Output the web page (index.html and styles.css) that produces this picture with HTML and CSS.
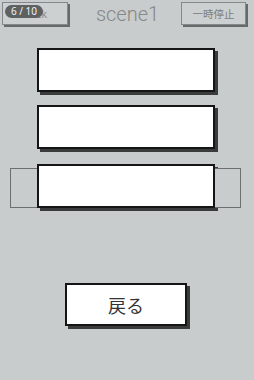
FILE: index.html
```html
<!DOCTYPE html>
<html>
<head>
<meta charset="utf-8">
<link rel="stylesheet" href="styles.css">
</head>
<body>
<div class="screen">
  <header class="topbar">
    <div class="back-wrap">
      <button class="tbtn back">Back</button>
      <span class="badge">6 / 10</span>
    </div>
    <div class="title">scene1</div>
    <button class="tbtn pause">一時停止</button>
  </header>
  <main class="content">
    <div class="card"></div>
    <div class="card second"></div>
    <div class="row third">
      <div class="side left"></div>
      <div class="card"></div>
      <div class="side right"></div>
    </div>
    <button class="return">戻る</button>
  </main>
</div>
</body>
</html>
```
FILE: styles.css
```css
html, body {
  margin: 0;
  padding: 0;
  background: #c9cccc;
}
.screen {
  width: 254px;
  height: 380px;
  font-family: "Noto Sans", "Noto Sans CJK JP", sans-serif;
  overflow: hidden;
}
.topbar {
  display: flex;
  align-items: flex-start;
  justify-content: space-between;
  padding: 2px 8px 0 2px;
  height: 28px;
  box-sizing: border-box;
}
.back-wrap {
  position: relative;
}
.tbtn {
  display: block;
  margin: 0;
  padding: 0;
  height: 23px;
  background: #cdd0d0;
  border: 1px solid #858888;
  box-shadow: 2px 2px 0 #666a6a;
  color: #7a7d7d;
  font-family: "Noto Sans", "Noto Sans CJK JP", sans-serif;
  font-size: 10px;
  box-sizing: border-box;
}
.back {
  width: 66px;
  text-align: center;
  font-size: 11px;
  color: #8a8d8d;
}
.badge {
  position: absolute;
  left: 3px;
  top: 3px;
  height: 13px;
  width: 38px;
  border-radius: 7px;
  background: #5e6161;
  color: #f2f2f2;
  font-size: 10px;
  line-height: 13px;
  text-align: center;
}
.title {
  font-family: "Roboto", "Noto Sans", sans-serif;
  font-weight: 300;
  font-size: 20px;
  color: #858888;
  line-height: 28px;
  margin-top: -2px;
  margin-left: 6px;
}
.pause {
  width: 65px;
  font-size: 10.5px;
}
.content {
  display: flex;
  flex-direction: column;
  align-items: center;
  padding-top: 20px;
}
.card {
  width: 178px;
  height: 44px;
  background: #fff;
  border: 2px solid #151515;
  box-sizing: border-box;
  box-shadow: 3px 3px 0 #3a3c3c;
  margin-left: -2px;
}
.second {
  margin-top: 13px;
}
.row {
  display: flex;
  align-items: flex-end;
  margin-top: 15px;
  margin-left: -3px;
}
.row .card {
  margin-left: 0;
}
.side {
  height: 40px;
  border: 1px solid #6c6f6f;
  box-sizing: border-box;
  background: #c9cccc;
}
.left {
  width: 27px;
  border-right: none;
}
.right {
  width: 26px;
  border-left: none;
}
.return {
  margin: 75px 0 0 -2px;
  width: 122px;
  height: 43px;
  background: #fff;
  border: 2px solid #151515;
  box-sizing: border-box;
  box-shadow: 3px 3px 0 #3a3c3c;
  font-family: "Noto Sans CJK JP", sans-serif;
  font-size: 18px;
  color: #333;
  padding: 0;
}
```
